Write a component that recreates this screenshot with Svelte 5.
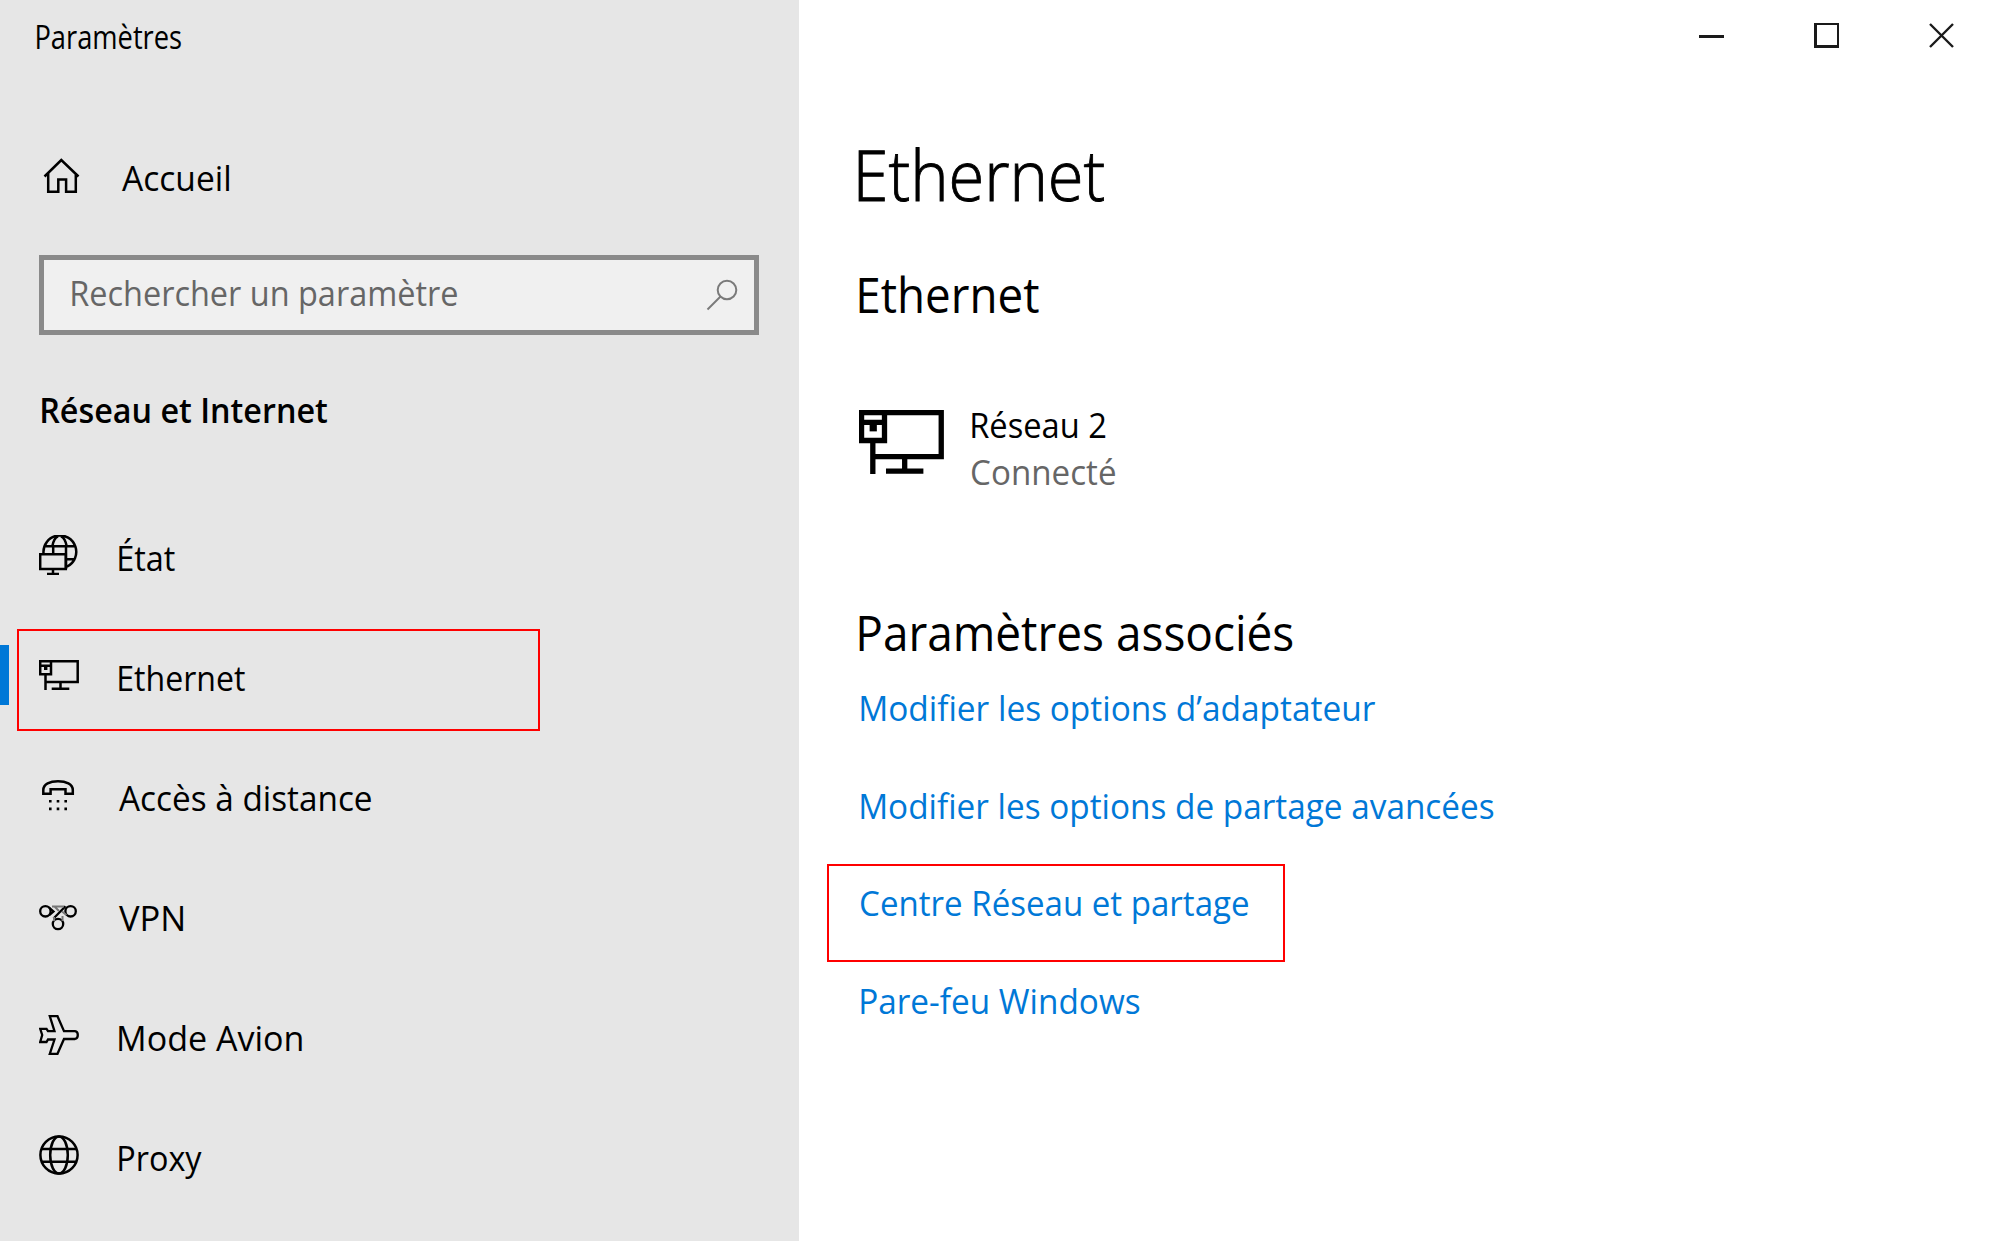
<script>
  const nav = [
    { id: 'status', label: 'État', ink: 56 },
    { id: 'ethernet', label: 'Ethernet', ink: 126, active: true },
    { id: 'dialup', label: 'Accès à distance', ink: 252 },
    { id: 'vpn', label: 'VPN', ink: 64 },
    { id: 'airplane', label: 'Mode Avion', ink: 183 },
    { id: 'proxy', label: 'Proxy', ink: 83 }
  ];

  const links = [
    { label: 'Modifier les options d’adaptateur', ink: 514 },
    { label: 'Modifier les options de partage avancées', ink: 633 },
    { label: 'Centre Réseau et partage', ink: 387, marked: true },
    { label: 'Pare-feu Windows', ink: 279 }
  ];

  // Condenses a label so that its visible glyphs span exactly `ink` pixels.
  function fit(node, ink) {
    const ctx = document.createElement('canvas').getContext('2d');
    const cs = getComputedStyle(node);
    ctx.font = `${cs.fontWeight} ${cs.fontSize} ${cs.fontFamily}`;
    const m = ctx.measureText(node.textContent);
    const scale = ink / (m.actualBoundingBoxLeft + m.actualBoundingBoxRight);
    node.style.transform = `scaleX(${scale}) translate(${m.actualBoundingBoxLeft}px, 1px)`;
  }
</script>

{#snippet monitor()}
  <path d="M7.5 26.9H38.7V6.2H1.2V19.3H12V6.2M1.2 10.8H12M6.5 19.3V35M21.5 27V34M12.7 33.7H30.3" />
  <path d="M5 10.5H8.4V15H5z" class="solid" />
{/snippet}

<div class="window">
  <aside>
    <div class="title"><span class="label" use:fit={144}>Paramètres</span></div>

    <div class="home">
      <svg class="icon" viewBox="0 0 40 40">
        <path d="M3.5 21.5 20.3 5 37.5 21.5M7.2 18.5V36.7H17.3V24.5H25.1V36.7H34.8V18.5" />
      </svg>
      <span class="label" use:fit={107}>Accueil</span>
    </div>

    <div class="search">
      <span class="label" use:fit={385}>Rechercher un paramètre</span>
      <svg viewBox="0 0 32 32"><circle cx="21" cy="11" r="9.3" /><path d="M14.5 17.5 1.5 30.5" /></svg>
    </div>

    <h3><span class="label" use:fit={285}>Réseau et Internet</span></h3>

    <nav>
      {#each nav as item}
        <div class="row" class:active={item.active}>
          <svg class="icon" viewBox="0 0 40 40">
            {#if item.id === 'status'}
              <path d="M4.5 18A16.4 16.4 0 1 1 28 31.6M5.5 11.3H36M14.2 11V18.8M27 11.3V34M28 24.2H36.5M13.5 10.5Q15 3 19 1.3M27.5 10.5Q26 3 22 1.3" />
              <path d="M1.2 19.2H26.8V34H1.2zM14 34V39M8 38.9H20" />
            {:else if item.id === 'ethernet'}
              {@render monitor()}
            {:else if item.id === 'dialup'}
              <path d="M4.3 18.8V15C4.3 9 11 6.2 19 6.2S33.8 9 33.8 15V18.8H26.5V14.2H11.6V18.8z" />
              <path class="solid" d="M10 25h2.6v2.6H10zM17.7 25h2.6v2.6h-2.6zM25.4 25H28v2.6h-2.6zM10 32.6h2.6v2.6H10zM17.7 32.6h2.6v2.6h-2.6zM25.4 32.6H28v2.6h-2.6z" />
            {:else if item.id === 'vpn'}
              <g class="thin">
                <circle cx="6.4" cy="16.3" r="5.2" /><circle cx="31.6" cy="16.3" r="5.2" /><circle cx="19" cy="29" r="5.2" />
                <path d="M10 12.5 14.5 16.5 10.5 20M26.5 11.2 14.5 23.5" />
              </g>
              <path class="faint" d="M13 11.5H25M15.5 11.5 20 16M23 16.5 27.5 20M15 22V26M23.5 21V26" />
            {:else if item.id === 'airplane'}
              <path class="thin" d="M10.8 1.2H18.5L25 16.2H36Q38.8 16.6 38.8 20T36 24H25L18.5 38.8H10.8L15.5 24.5H9L7.5 27H1.2L3.2 20 1.2 13.8H7.5L9 16.2H15.5z" />
            {:else}
              <circle cx="20" cy="20" r="18.6" />
              <ellipse cx="20" cy="20" rx="8.8" ry="18.6" />
              <path d="M2 14H38M2 26.7H38" />
            {/if}
          </svg>
          <span class="label" use:fit={item.ink}>{item.label}</span>
        </div>
      {/each}
    </nav>
  </aside>

  <main>
    <div class="controls">
      <svg viewBox="0 0 25 25"><path class="solid" d="M0 12h25v3H0z" /></svg>
      <svg viewBox="0 0 25 25"><path class="solid" fill-rule="evenodd" d="M0 0h25v25H0zM3 2v20h20V2z" /></svg>
      <svg viewBox="0 0 25 25"><path d="M1 1 24 24M24 1 1 24" /></svg>
    </div>

    <h1><span class="label" use:fit={245}>Ethernet</span></h1>
    <h2><span class="label" use:fit={180}>Ethernet</span></h2>

    <div class="device">
      <svg viewBox="0 5 40 30">{@render monitor()}</svg>
      <div class="info">
        <span class="label" use:fit={134}>Réseau 2</span>
        <span class="label state" use:fit={143}>Connecté</span>
      </div>
    </div>

    <h2 class="related"><span class="label" use:fit={434}>Paramètres associés</span></h2>
    <div class="links">
      {#each links as link}
        <a href="#top" class:marked={link.marked}><span class="label" use:fit={link.ink}>{link.label}</span></a>
      {/each}
    </div>
  </main>
</div>

<style>
  :global(body) { margin: 0; overflow: hidden; }

  .window {
    display: flex;
    width: 1993px;
    height: 1241px;
    background: #fff;
    color: #000;
    font: 35px/48px 'Open Sans', 'Noto Sans', sans-serif;
    overflow: hidden;
  }

  .label {
    display: inline-block;
    white-space: nowrap;
    transform-origin: 0 50%;
  }

  h1, h2, h3 { margin: 0; font-weight: 400; }

  svg {
    flex: none;
    display: block;
    fill: none;
    stroke: #000;
    stroke-width: 2.5;
  }
  .solid { fill: #000; stroke: none; }
  .thin { stroke-width: 2.3; }
  .faint { stroke: #777; stroke-width: 2; }
  .icon { width: 40px; height: 40px; }

  aside {
    flex: none;
    box-sizing: border-box;
    width: 799px;
    padding-top: 12px;
    background: #e6e6e6;
  }

  .title { height: 133px; padding-left: 37px; font-size: 32px; }

  .home {
    display: flex;
    align-items: center;
    gap: 41px;
    height: 60px;
    padding-left: 41px;
  }
  .home .label, .row .label { padding-top: 3px; }

  .search {
    display: flex;
    align-items: center;
    justify-content: space-between;
    box-sizing: border-box;
    width: 720px;
    height: 80px;
    margin: 50px 0 50px 39px;
    padding: 0 16px 0 28px;
    border: 5px solid #8a8a8a;
    background: #f0f0f0;
    color: #666;
  }
  .search .label { padding-bottom: 7px; }
  .search svg { width: 32px; height: 32px; stroke: #7a7a7a; stroke-width: 2; }

  h3 { height: 110px; padding-left: 42px; font-size: 35px; font-weight: 600; }

  .row {
    position: relative;
    display: flex;
    align-items: center;
    gap: 40px;
    height: 120px;
    padding-left: 39px;
  }
  .active::before {
    content: '';
    position: absolute;
    left: 0;
    top: 30px;
    width: 9px;
    height: 60px;
    background: #0078d7;
  }
  .active::after {
    content: '';
    position: absolute;
    box-sizing: border-box;
    left: 17px;
    top: 14px;
    width: 523px;
    height: 102px;
    border: 2px solid #f00;
  }

  main {
    flex: 1;
    padding: 23px 39px 0 60px;
  }

  .controls { display: flex; justify-content: flex-end; gap: 90px; }
  .controls svg { width: 25px; height: 25px; stroke: #1a1a1a; stroke-width: 2.4; }
  .controls .solid { fill: #1a1a1a; }

  h1 {
    margin-top: 77px;
    font-size: 70px;
    font-weight: 300;
    line-height: 96px;
    -webkit-text-stroke: 0.9px #000;
  }
  h2 { margin-top: 40px; font-size: 49px; line-height: 64px; }

  .device { display: flex; gap: 27.5px; margin-top: 75px; }
  .device svg { width: 85px; height: 64px; margin-top: 10px; }
  .info { display: flex; flex-direction: column; line-height: 47px; }
  .state { color: #666; }

  .related { margin-top: 105px; }

  .links {
    display: flex;
    flex-direction: column;
    align-items: flex-start;
    gap: 49.7px;
    margin-top: 20px;
    padding-left: 2px;
  }
  a { position: relative; color: #0078d7; text-decoration: none; }
  .marked::after {
    content: '';
    position: absolute;
    box-sizing: border-box;
    left: -34px;
    top: -14px;
    width: 458px;
    height: 98px;
    border: 2px solid #f00;
  }
</style>
